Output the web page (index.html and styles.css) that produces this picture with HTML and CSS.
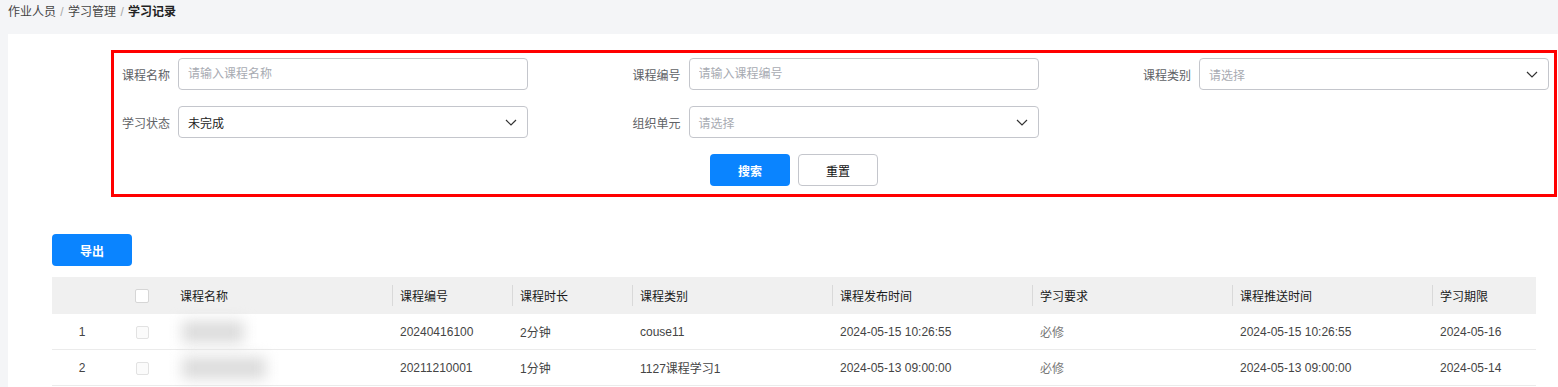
FILE: index.html
```html
<!DOCTYPE html>
<html lang="zh-CN">
<head>
  <meta charset="UTF-8" />
  <meta name="viewport" content="width=device-width, initial-scale=1.0"/>
  <title>学习记录</title>
  <link rel="stylesheet" href="styles.css">
</head>
<body>
  <!-- Breadcrumb -->
  <div class="breadcrumb">
    <span class="crumb">作业人员</span>
    <span class="sep">/</span>
    <span class="crumb">学习管理</span>
    <span class="sep">/</span>
    <span class="crumb current">学习记录</span>
  </div>

  <div class="card">
    <!-- Search Form -->
    <form class="search-box" autocomplete="off" onsubmit="return false">
      <div class="form-grid">
        <div class="form-item">
          <label class="form-label">课程名称</label>
          <input class="form-input" type="text" placeholder="请输入课程名称" />
        </div>
        <div class="form-item">
          <label class="form-label">课程编号</label>
          <input class="form-input" type="text" placeholder="请输入课程编号" />
        </div>
        <div class="form-item">
          <label class="form-label">课程类别</label>
          <div class="form-select placeholder">
            <span>请选择</span>
            <svg class="arrow" width="12" height="7" viewBox="0 0 12 7"><polyline points="1,1 6,6 11,1" fill="none" stroke="#333" stroke-width="1.2"/></svg>
          </div>
        </div>
        <div class="form-item">
          <label class="form-label">学习状态</label>
          <div class="form-select">
            <span>未完成</span>
            <svg class="arrow" width="12" height="7" viewBox="0 0 12 7"><polyline points="1,1 6,6 11,1" fill="none" stroke="#333" stroke-width="1.2"/></svg>
          </div>
        </div>
        <div class="form-item">
          <label class="form-label">组织单元</label>
          <div class="form-select placeholder">
            <span>请选择</span>
            <svg class="arrow" width="12" height="7" viewBox="0 0 12 7"><polyline points="1,1 6,6 11,1" fill="none" stroke="#333" stroke-width="1.2"/></svg>
          </div>
        </div>
      </div>
      <div class="form-actions">
        <button type="submit" class="btn btn-primary">搜索</button>
        <button type="reset" class="btn btn-default">重置</button>
      </div>
    </form>

    <div class="toolbar">
      <button class="btn btn-primary">导出</button>
    </div>

    <!-- Records Table -->
    <table class="record-table">
      <colgroup>
        <col style="width:60px"><col style="width:60px"><col style="width:220px">
        <col style="width:120px"><col style="width:120px"><col style="width:200px">
        <col style="width:200px"><col style="width:200px"><col style="width:200px">
        <col style="width:104px">
      </colgroup>
      <thead>
        <tr>
          <th></th>
          <th class="center"><span class="checkbox"></span></th>
          <th>课程名称</th>
          <th class="divided">课程编号</th>
          <th class="divided">课程时长</th>
          <th class="divided">课程类别</th>
          <th class="divided">课程发布时间</th>
          <th class="divided">学习要求</th>
          <th class="divided">课程推送时间</th>
          <th class="divided">学习期限</th>
        </tr>
      </thead>
      <tbody>
        <tr>
          <td class="center">1</td>
          <td class="center"><span class="checkbox disabled"></span></td>
          <td><span class="blurred short"></span></td>
          <td>20240416100</td>
          <td>2分钟</td>
          <td>couse11</td>
          <td>2024-05-15 10:26:55</td>
          <td class="muted">必修</td>
          <td>2024-05-15 10:26:55</td>
          <td>2024-05-16</td>
        </tr>
        <tr>
          <td class="center">2</td>
          <td class="center"><span class="checkbox disabled"></span></td>
          <td><span class="blurred long"></span></td>
          <td>20211210001</td>
          <td>1分钟</td>
          <td>1127课程学习1</td>
          <td>2024-05-13 09:00:00</td>
          <td class="muted">必修</td>
          <td>2024-05-13 09:00:00</td>
          <td>2024-05-14</td>
        </tr>
      </tbody>
    </table>
  </div>
</body>
</html>
```

FILE: styles.css
```css
:root {
  --primary: #0a84ff;
  --page-bg: #f4f5f7;
  --border: #c4c6cc;
  --label: #606266;
  --placeholder: #a8abb2;
  --text: #333;
  --row-line: #ebebeb;
}

html, body {
  margin: 0;
  padding: 0;
  background: var(--page-bg);
  font-family: "Liberation Sans", "Noto Sans CJK SC", sans-serif;
  font-size: 12px;
  color: var(--text);
  overflow: hidden;
}

.breadcrumb {
  height: 24px;
  line-height: 24px;
  padding-left: 8px;
  margin-bottom: 10px;
  color: #444;
}

.breadcrumb .sep {
  color: #aaa;
  margin: 0 1px;
}

.breadcrumb .current {
  color: #222;
  font-weight: 700;
}

.card {
  margin-left: 8px;
  background: #fff;
  padding-top: 16px;
  min-height: 400px;
}

/* search form */
.search-box {
  margin: 0 0 0 103px;
  width: 1446px;
  box-sizing: border-box;
  border: 3px solid #ff0000;
  padding: 5px 0 8px 4px;
}

.form-grid {
  display: grid;
  grid-template-columns: repeat(3, 410px);
  column-gap: 100.5px;
  row-gap: 16px;
}

.form-item {
  display: flex;
  align-items: center;
}

.form-label {
  width: 60px;
  padding-right: 8px;
  box-sizing: border-box;
  text-align: right;
  color: var(--label);
  white-space: nowrap;
}

.form-input, .form-select {
  width: 350px;
  height: 32px;
  box-sizing: border-box;
  border: 1px solid var(--border);
  border-radius: 4px;
  padding: 0 10px 0 9px;
  font-family: inherit;
  font-size: 12px;
  color: var(--text);
  background: #fff;
  outline: none;
}

.form-input::placeholder {
  color: var(--placeholder);
}

.form-select {
  display: flex;
  align-items: center;
  justify-content: space-between;
  color: #222;
}

.form-select.placeholder {
  color: var(--placeholder);
}

.form-select .arrow {
  display: block;
}

.form-actions {
  display: flex;
  gap: 8px;
  padding-left: 592px;
  margin-top: 16px;
}

.btn {
  width: 80px;
  height: 32px;
  border-radius: 4px;
  font-family: inherit;
  font-size: 12px;
  cursor: pointer;
  padding: 0;
}

.btn-primary {
  background: var(--primary);
  border: none;
  color: #fff;
  font-weight: 700;
}

.btn-default {
  background: #fff;
  border: 1px solid var(--border);
  color: #111;
}

.toolbar {
  padding: 37px 0 11px 44px;
}

/* table */
.record-table {
  margin-left: 44px;
  width: 1484px;
  border-collapse: collapse;
  table-layout: fixed;
}

.record-table th {
  background: #f0f0f0;
  height: 37px;
  padding: 0 8px;
  text-align: left;
  font-weight: 400;
  color: #1a1a1a;
  position: relative;
}

.record-table th.divided::before {
  content: "";
  position: absolute;
  left: 0;
  top: 8px;
  bottom: 8px;
  width: 1px;
  background: #d9d9d9;
}

.record-table td {
  height: 35px;
  padding: 0 8px;
  border-bottom: 1px solid var(--row-line);
  color: #444;
  white-space: nowrap;
}

.record-table .center {
  text-align: center;
  padding: 0;
}

.record-table td.muted {
  color: #777;
}

.checkbox {
  display: inline-block;
  width: 14px;
  height: 14px;
  box-sizing: border-box;
  border: 1px solid #d6d6d6;
  border-radius: 2px;
  background: #fff;
  vertical-align: middle;
}

.checkbox.disabled {
  width: 13px;
  height: 13px;
  border-color: #e2e2e2;
  background: #fbfbfb;
}

.blurred {
  display: inline-block;
  height: 22px;
  background: #dcdcdc;
  filter: blur(7px);
  vertical-align: middle;
  margin-left: 2px;
}

.blurred.short {
  width: 62px;
}

.blurred.long {
  width: 84px;
}
```
